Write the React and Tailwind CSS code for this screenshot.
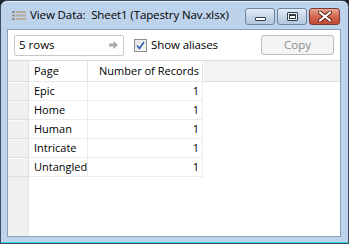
const rows = [
  { page: 'Epic', count: 1 },
  { page: 'Home', count: 1 },
  { page: 'Human', count: 1 },
  { page: 'Intricate', count: 1 },
  { page: 'Untangled', count: 1 },
]

function GridIcon() {
  return (
    <svg width="14" height="10" viewBox="0 0 14 10">
      {[0, 3.5, 7].map((y) => (
        <g key={y}>
          <rect x="0" y={y} width="3" height="2" fill="#9a9184" />
          <rect x="4" y={y} width="10" height="2" fill="#b7ada0" />
        </g>
      ))}
    </svg>
  )
}

function CaptionButton({ kind }) {
  const isClose = kind === 'close'
  return (
    <div
      className={`flex items-center justify-center h-[17px] rounded-[3px] border ${
        isClose
          ? 'w-[31px] border-[#7d3a33] bg-gradient-to-b from-[#e8a595] via-[#d2664f] to-[#c24a33]'
          : 'w-[30px] border-[#6f849d] bg-gradient-to-b from-[#e4edf7] via-[#c7d6e8] to-[#b3c7df]'
      }`}
    >
      {kind === 'min' && (
        <div className="w-[11px] h-[4px] mt-[5px] bg-white border border-[#333d4a] rounded-[1px]" />
      )}
      {kind === 'max' && (
        <div className="w-[11px] h-[9px] flex items-center justify-center bg-white/70 border border-[#333d4a] rounded-[1px]">
          <div className="w-[7px] h-[5px] border border-t-2 border-[#333d4a] bg-white" />
        </div>
      )}
      {isClose && (
        <svg width="14" height="11" viewBox="0 0 14 11">
          <path d="M2 1.5 L12 9.5 M12 1.5 L2 9.5" stroke="#5a1f17" strokeWidth="4" strokeLinecap="round" />
          <path d="M2 1.5 L12 9.5 M12 1.5 L2 9.5" stroke="#ffffff" strokeWidth="2.2" strokeLinecap="round" />
        </svg>
      )}
    </div>
  )
}

export default function App() {
  return (
    <div
      className="w-[349px] h-[244px] bg-[#1b2530] text-black"
      style={{ fontFamily: '"Open Sans", "Noto Sans", sans-serif' }}
    >
      <div className="w-full h-full flex flex-col rounded-t-[7px] border border-[#3a4b5e] bg-[#bdd2eb] shadow-[inset_0_-1px_0_#3fd6e6,inset_0_1px_0_#e3edf8] pl-[6px] pr-[7px] pb-[6px]">
        {/* title bar */}
        <div className="h-[28px] flex items-center shrink-0">
          <div className="ml-[5px] mt-[2px]">
            <GridIcon />
          </div>
          <div className="ml-[4px] text-[11.5px] tracking-[-0.1px] text-black whitespace-pre">
            View Data:  Sheet1 (Tapestry Nav.xlsx)
          </div>
          <div className="ml-auto flex gap-[2px] mr-[1px] mt-[3px]">
            <CaptionButton kind="min" />
            <CaptionButton kind="max" />
            <CaptionButton kind="close" />
          </div>
        </div>

        {/* client area */}
        <div className="flex-1 flex flex-col border border-[#8ba0b8] bg-white min-h-0">
          {/* toolbar */}
          <div className="h-[30px] shrink-0 flex items-center">
            <div className="ml-[6px] w-[110px] h-[21px] flex items-center border border-[#c5c8cd] rounded-[2px] bg-white">
              <span className="ml-[4px] text-[11.5px]">5 rows</span>
              <svg className="ml-auto mr-[5px]" width="9" height="8" viewBox="0 0 9 8">
                <path d="M0 2.5 H4.5 V0 L9 4 L4.5 8 V5.5 H0 Z" fill="#a9a9a9" />
              </svg>
            </div>
            <div className="ml-[10px] w-[13px] h-[13px] border border-[#8f8f8f] bg-gradient-to-br from-[#e4e4e4] to-[#fafafa] flex items-center justify-center">
              <svg width="9" height="9" viewBox="0 0 9 9">
                <path d="M1 4.5 L3.5 7.5 L8 1" stroke="#2a5db0" strokeWidth="1.6" fill="none" />
              </svg>
            </div>
            <span className="ml-[4px] text-[11.5px] tracking-[-0.1px]">Show aliases</span>
            <div className="ml-auto mr-[6px] w-[73px] h-[20px] border border-[#bcbcbc] rounded-[3px] bg-[#f4f4f4] flex items-center justify-center text-[11.5px] text-[#8a8a8a]">
              Copy
            </div>
          </div>

          {/* grid */}
          <div className="flex-1 flex flex-col border-t border-[#dcdcdc] min-h-0 text-[11px]">
            <div className="h-[21px] flex shrink-0">
              <div className="w-[21px] bg-[#f0f0f0] border-r border-b border-[#dedede]" />
              <div className="w-[59px] border-r border-b border-[#e6e6e6] bg-white flex items-center pl-[5px]">
                Page
              </div>
              <div className="w-[115px] border-r border-b border-[#e6e6e6] bg-white flex items-center justify-end pr-[3px]">
                Number of Records
              </div>
              <div className="flex-1 bg-[#f3f3f3] border-b border-[#e0e0e0] border-l border-l-white" />
            </div>
            {rows.map((r) => (
              <div key={r.page} className="h-[19px] flex shrink-0">
                <div className="w-[21px] bg-[#f0f0f0] border-r border-b border-[#dedede] shadow-[inset_0_1px_0_#fafafa]" />
                <div className="w-[59px] border-r border-b border-[#ececec] flex items-center pl-[5px]">
                  {r.page}
                </div>
                <div className="w-[115px] border-r border-b border-[#ececec] flex items-center justify-end pr-[3px]">
                  {r.count}
                </div>
                <div className="flex-1" />
              </div>
            ))}
            <div className="flex-1 flex">
              <div className="w-[21px] bg-[#f0f0f0] border-r border-[#e6e6e6]" />
              <div className="flex-1 bg-white" />
            </div>
          </div>
        </div>
      </div>
    </div>
  )
}
